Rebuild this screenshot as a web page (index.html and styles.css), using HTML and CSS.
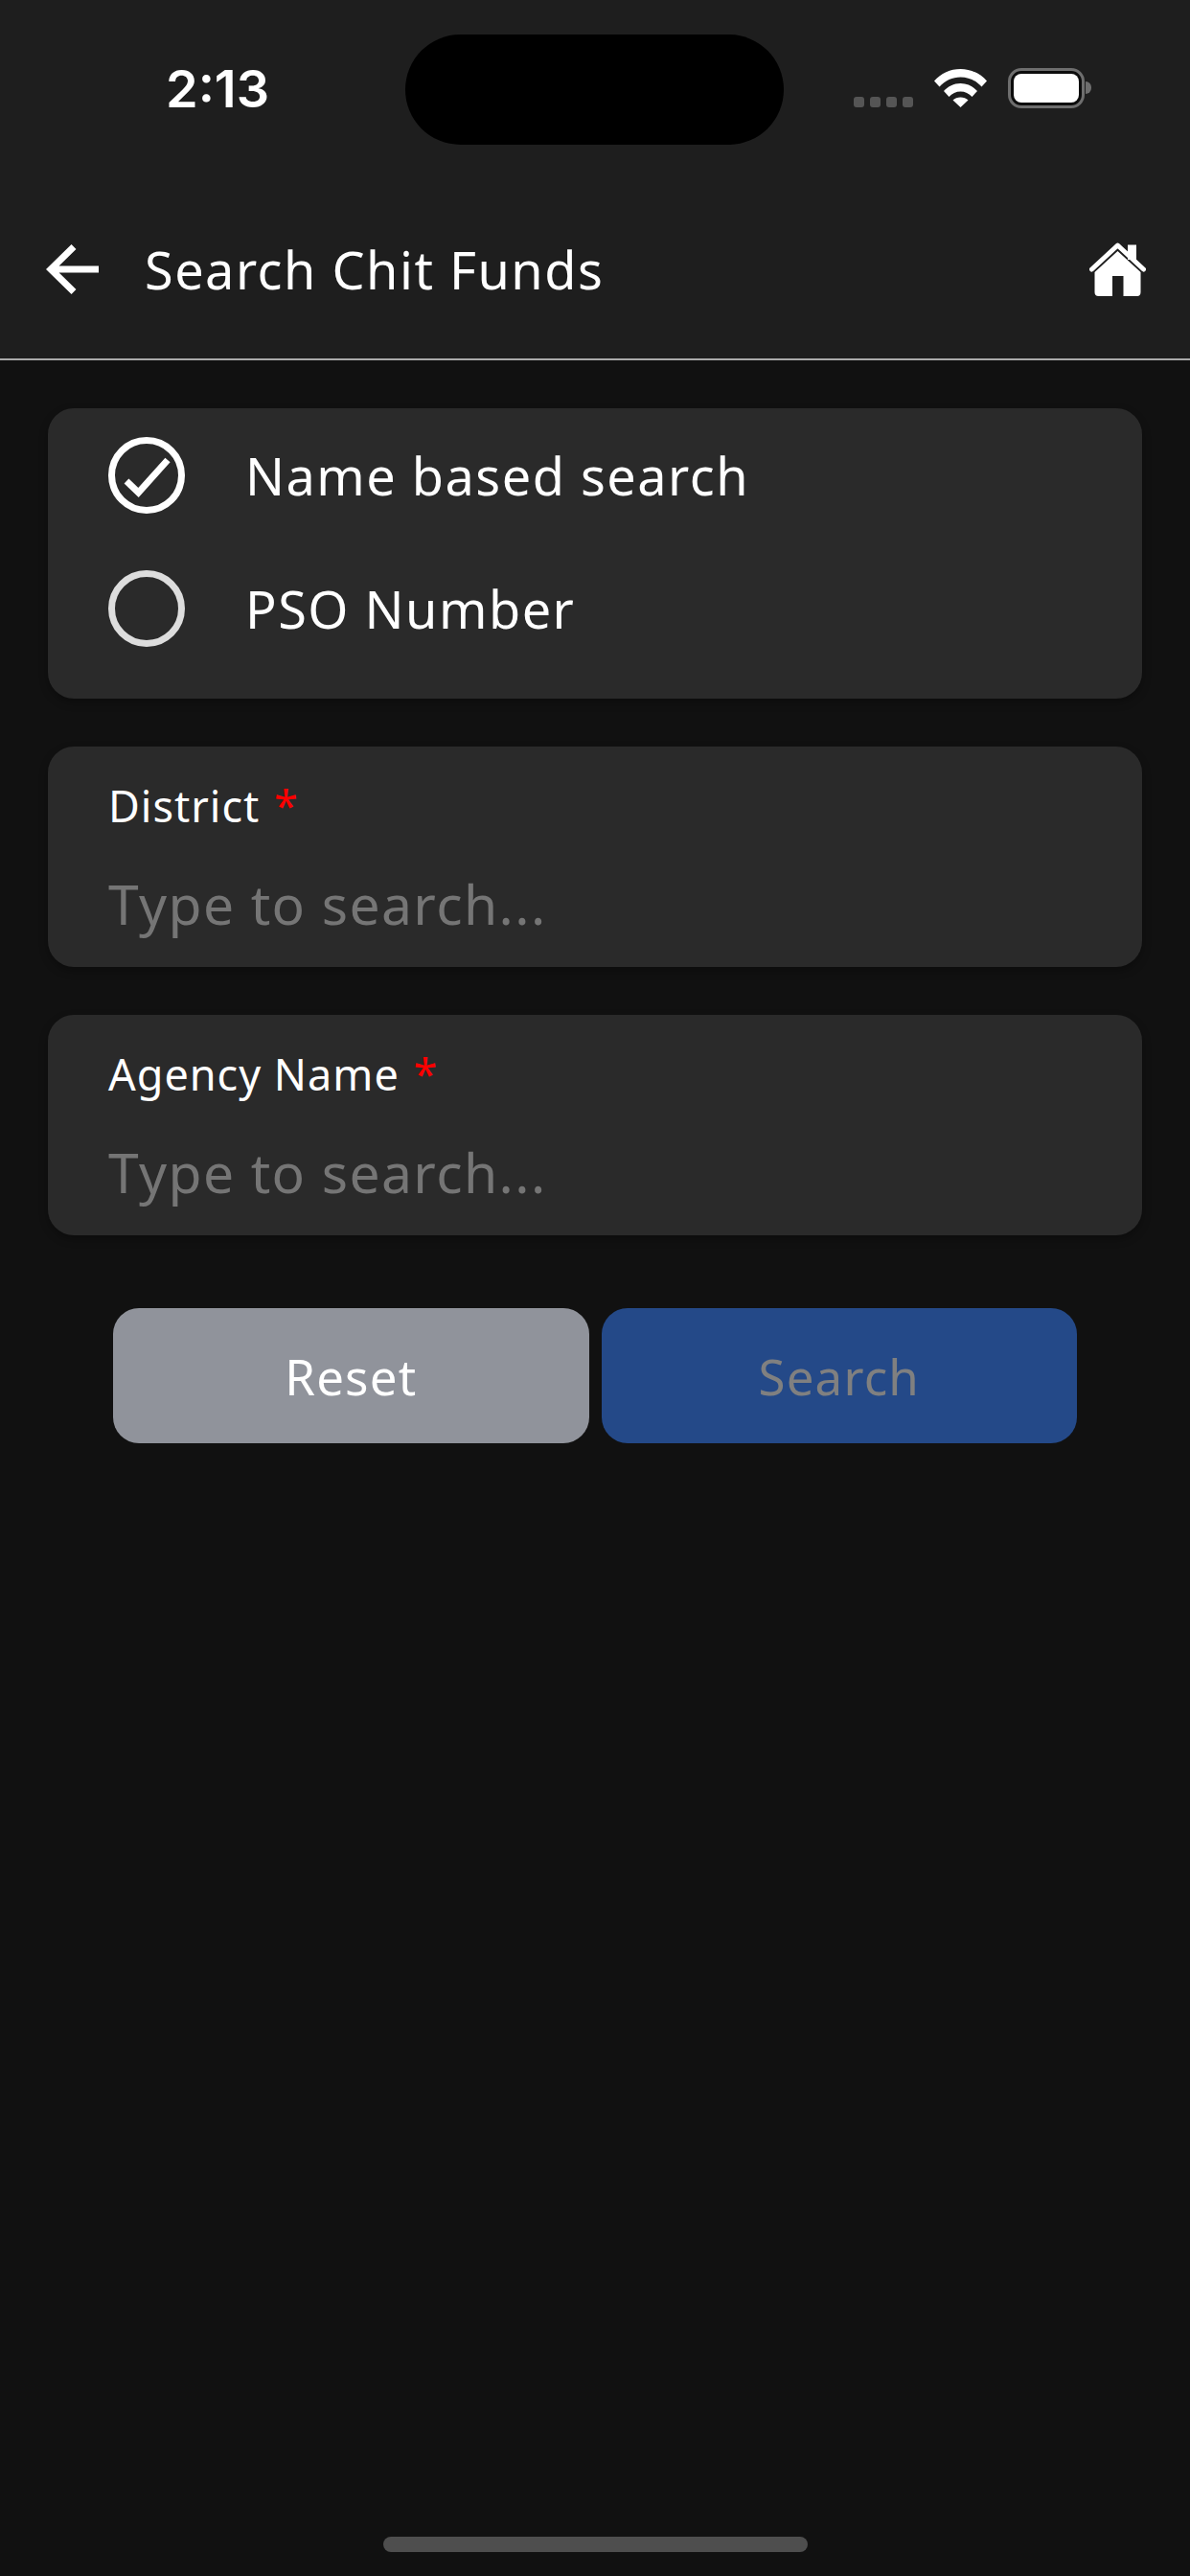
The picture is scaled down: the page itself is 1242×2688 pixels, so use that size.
FILE: index.html
```html
<!DOCTYPE html>
<html>
<head>
    <title>Search Chit Funds</title>
    <link rel="stylesheet" href="styles.css">
</head>
<body>
    <div class="page">
        <div class="top">
            <div class="status">
                <div class="time">2:13</div>
                <div class="island"></div>
                <div class="status-icons">
                    <div class="signal"><span></span><span></span><span></span><span></span></div>
                    <svg class="wifi" viewBox="0 0 55 40">
                        <path d="M0 12.500C7 4.500 17 0 27.500 0S48 4.500 55 12.500L49.500 18.500C43.500 12 36 8.500 27.500 8.500S11.500 12 5.500 18.500Z"/>
                        <path d="M10 23C14.500 18 20.500 15 27.500 15S40.500 18 45 23L39.500 29C36.500 25.500 32 23.500 27.500 23.500S18.500 25.500 15.500 29Z"/>
                        <path d="M27.500 40L19.500 32.500C21.500 30.500 24.500 29.500 27.500 29.500S33.500 30.500 35.500 32.500Z"/>
                    </svg>
                    <div class="battery"><div class="battery-fill"></div></div>
                    <div class="battery-nub"></div>
                </div>
            </div>
            <div class="appbar">
                <svg class="back" viewBox="0 0 55 52">
                    <path d="M29 2.500L5 26L29 49.500M5 26H55" fill="none" stroke="#fff" stroke-width="7"/>
                </svg>
                <div class="title">Search Chit Funds</div>
                <svg class="home" viewBox="0 0 59 56">
                    <path d="M40 2.500H49V18H40Z" fill="#fff"/>
                    <path d="M2.500 28L29.500 3L56.500 28" fill="none" stroke="#fff" stroke-width="5" stroke-linecap="round" stroke-linejoin="round"/>
                    <path d="M29.500 9L53.500 31V52C53.500 54.500 52 56 50 56H35.500V35H24V56H9.500C7 56 5.500 54.500 5.500 52V31Z" fill="#fff"/>
                </svg>
            </div>
        </div>

        <div class="content">
            <div class="card radios">
                <div class="radio-row">
                    <svg class="radio" viewBox="0 0 80 80">
                        <circle cx="40" cy="40" r="36.500" fill="none" stroke="#fff" stroke-width="7"/>
                        <path d="M19 46L31.500 58L62 24" fill="none" stroke="#fff" stroke-width="7"/>
                    </svg>
                    <div class="radio-label">Name based search</div>
                </div>
                <div class="radio-row">
                    <svg class="radio" viewBox="0 0 80 80">
                        <circle cx="40" cy="40" r="36.500" fill="none" stroke="#ddd" stroke-width="7"/>
                    </svg>
                    <div class="radio-label">PSO Number</div>
                </div>
            </div>

            <div class="card field">
                <div class="field-label">District <span class="required">*</span></div>
                <div class="placeholder">Type to search...</div>
            </div>

            <div class="card field">
                <div class="field-label">Agency Name <span class="required">*</span></div>
                <div class="placeholder">Type to search...</div>
            </div>

            <div class="buttons">
                <div class="btn btn-reset">Reset</div>
                <div class="btn btn-search">Search</div>
            </div>
        </div>

        <div class="home-bar"></div>
    </div>
</body>
</html>
```

FILE: styles.css
```css
/* Basic styling */
body {
    margin: 0;
    background-color: #111111;
    font-family: "Noto Sans", sans-serif;
    color: #fff;
}
.page {
    width: 1242px;
    height: 2688px;
    display: flex;
    flex-direction: column;
    background-color: #111111;
}

/* Status bar and app bar */
.top {
    height: 374px;
    background-color: #1e1e1e;
    border-bottom: 2px solid #aaaaaa;
}
.status {
    height: 219px;
    padding: 36px 0 0 173px;
    box-sizing: border-box;
    display: flex;
    align-items: flex-start;
}
.time {
    width: 250px;
    margin-top: 27px;
    font-family: Inter, sans-serif;
    font-size: 54px;
    font-weight: 600;
    line-height: 60px;
}
.island {
    width: 395px;
    height: 115px;
    border-radius: 58px;
    background-color: #000;
}
.status-icons {
    margin: 35px 0 0 73px;
    display: flex;
    align-items: flex-start;
}
.signal {
    margin-top: 30px;
    display: flex;
    gap: 6px;
}
.signal span {
    width: 11px;
    height: 11px;
    border-radius: 3px;
    background-color: #555555;
}
.wifi {
    width: 55px;
    height: 40px;
    margin: 1px 0 0 22px;
    fill: #fff;
}
.battery {
    width: 80px;
    height: 42px;
    margin-left: 22px;
    padding: 3px;
    box-sizing: border-box;
    border: 3px solid #6e6e6e;
    border-radius: 14px;
    background-color: #0c0c0c;
}
.battery-fill {
    height: 100%;
    border-radius: 8px;
    background-color: #fff;
}
.battery-nub {
    width: 6px;
    height: 13px;
    margin: 14px 0 0 1px;
    border-radius: 0 6px 6px 0;
    background-color: #6e6e6e;
}
.appbar {
    height: 155px;
    padding: 0 46px 0 48px;
    display: flex;
    align-items: center;
}
.back {
    width: 55px;
    height: 52px;
    margin-top: -31px;
}
.title {
    margin: -31px 0 0 48px;
    flex: 1;
    font-size: 54px;
    line-height: 74px;
    letter-spacing: 1.500px;
}
.home {
    width: 59px;
    height: 56px;
    margin-top: -31px;
}

/* Cards */
.content {
    flex: 1;
    padding: 50px 50px 0;
    display: flex;
    flex-direction: column;
    gap: 50px;
}
.card {
    border-radius: 27px;
    background-color: #2a2a2a;
    box-shadow: 0 4px 10px rgba(0, 0, 0, 0.3);
}
.radios {
    height: 303px;
    padding: 30px 63px 0;
    box-sizing: border-box;
    display: flex;
    flex-direction: column;
    gap: 59px;
}
.radio-row {
    height: 80px;
    display: flex;
    align-items: center;
    gap: 63px;
}
.radio {
    width: 80px;
    height: 80px;
    flex: none;
}
.radio-label {
    font-size: 54px;
    line-height: 74px;
    letter-spacing: 1.500px;
}
.field {
    height: 230px;
    padding: 31px 63px 0;
    box-sizing: border-box;
}
.field-label {
    font-size: 45px;
    line-height: 62px;
    letter-spacing: 1px;
}
.required {
    margin-left: 2px;
    color: #ff0000;
}
.placeholder {
    margin-top: 32px;
    font-size: 57px;
    line-height: 78px;
    letter-spacing: 1.400px;
    color: #757575;
}

/* Buttons */
.buttons {
    margin-top: 26px;
    padding: 0 68px;
    display: flex;
    gap: 13px;
}
.btn {
    flex: 1;
    height: 141px;
    border-radius: 27px;
    display: flex;
    align-items: center;
    justify-content: center;
    font-size: 51px;
    letter-spacing: 1.200px;
}
.btn-reset {
    background-color: #90939b;
}
.btn-search {
    background-color: #244988;
    color: #808080;
}

/* Home indicator */
.home-bar {
    width: 443px;
    height: 16px;
    margin: 0 auto 25px;
    border-radius: 8px;
    background-color: #4e4e4e;
}
```
